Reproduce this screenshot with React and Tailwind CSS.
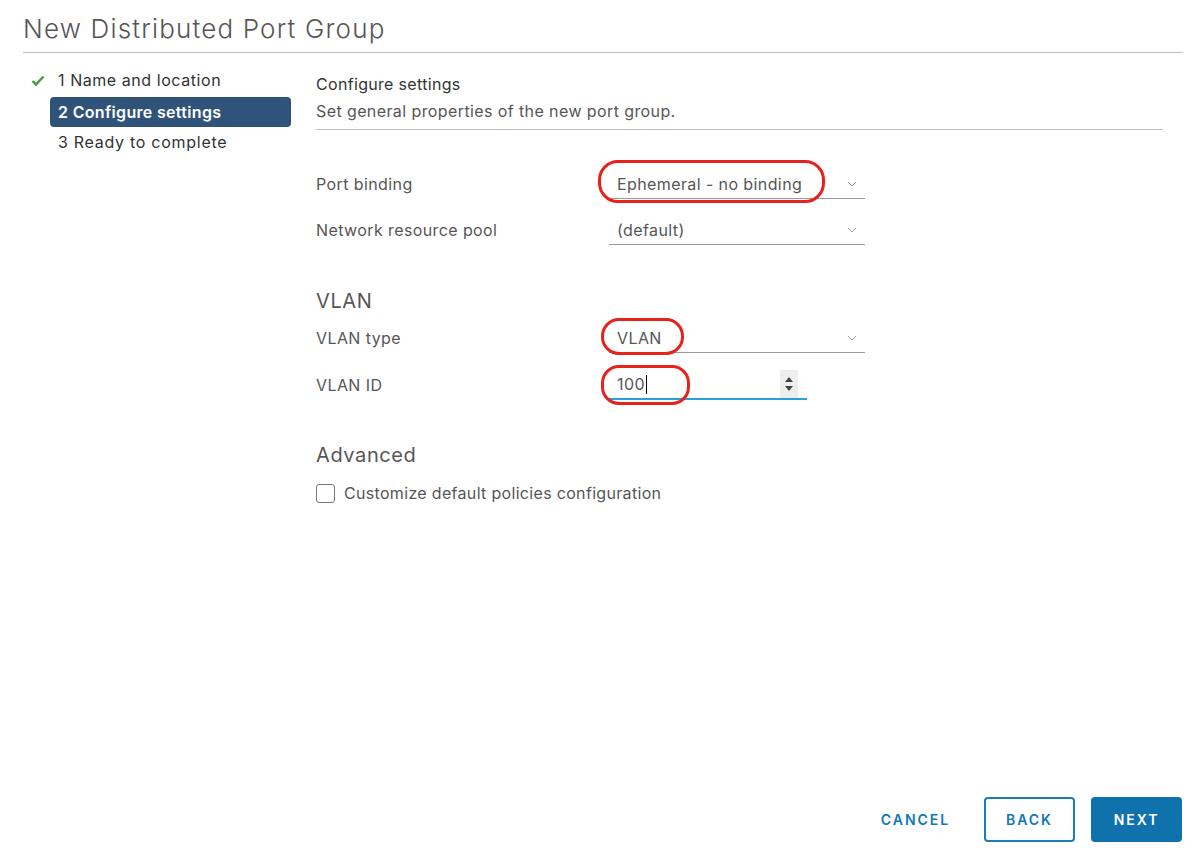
import React from "react";

const font = { fontFamily: "Inter, 'Noto Sans', sans-serif" };

function Chevron() {
  return (
    <svg width="10" height="6" viewBox="0 0 10 6" className="shrink-0">
      <path d="M1 1 L5 5 L9 1" fill="none" stroke="#a0a0a0" strokeWidth="1" />
    </svg>
  );
}

function Select({ value, width }) {
  return (
    <div className={`h-[30px] ${width} border-b border-[#9a9a9a] flex items-center justify-between pl-2 pr-[8px]`}>
      <span className="text-[16px] tracking-[0.025em] text-[#565656]">{value}</span>
      <Chevron />
    </div>
  );
}

function Row({ label, children, className = "" }) {
  return (
    <div className={`flex items-center h-[30px] ${className}`}>
      <div className="w-[293px] text-[16px] tracking-[0.025em] text-[#565656]">{label}</div>
      {children}
    </div>
  );
}

export default function App() {
  return (
    <div className="relative w-[1200px] h-[860px] bg-white flex flex-col" style={font}>
      <div className="mx-[23px] mr-[17px] pt-[13px] pb-[7px] border-b border-[#bdbdbd]">
        <h1 className="text-[26px] leading-[32px] tracking-[0.045em] text-[#565656] font-light">New Distributed Port Group</h1>
      </div>

      <div className="flex flex-1 pl-[23px]">
        {/* Left nav */}
        <div className="w-[293px] pt-[12px] flex flex-col">
          <div className="flex items-center h-[30px]">
            <div className="w-[27px] flex justify-center pl-[2px]">
              <svg width="14" height="11" viewBox="0 0 14 11">
                <path d="M1.5 6 L5 9.5 L12.5 1.5" fill="none" stroke="#3f9e33" strokeWidth="2.4" />
              </svg>
            </div>
            <div className="px-2 text-[16px] tracking-[0.035em] text-[#333]">1 Name and location</div>
          </div>
          <div className="flex items-center h-[30px] mt-[2px]">
            <div className="w-[27px]" />
            <div className="w-[241px] h-[30px] rounded-[4px] bg-[#2f5379] px-2 flex items-center text-[16px] tracking-[0.02em] font-semibold text-white">2 Configure settings</div>
          </div>
          <div className="flex items-center h-[30px]">
            <div className="w-[27px]" />
            <div className="px-2 text-[16px] tracking-[0.045em] text-[#333]">3 Ready to complete</div>
          </div>
        </div>

        {/* Right content */}
        <div className="flex-1 flex flex-col pr-[18px]">
          <div className="w-[847px] pt-[20px] pb-[7px] border-b border-[#bdbdbd]">
            <div className="h-[22px] leading-[22px] text-[16px] tracking-[0.02em] text-[#333]">Configure settings</div>
            <div className="h-[22px] leading-[22px] mt-[5px] text-[16px] tracking-[0.025em] text-[#565656]">Set general properties of the new port group.</div>
          </div>

          <Row label="Port binding" className="mt-[39px]">
            <Select value="Ephemeral - no binding" width="w-[256px]" />
          </Row>
          <Row label="Network resource pool" className="mt-[16px]">
            <Select value="(default)" width="w-[256px]" />
          </Row>

          <div className="mt-[43px] h-[26px] leading-[26px] text-[20px] tracking-[0.03em] text-[#565656]">VLAN</div>
          <Row label="VLAN type" className="mt-[9px]">
            <Select value="VLAN" width="w-[256px]" />
          </Row>
          <Row label="VLAN ID" className="mt-[17px]">
            <div className="w-[198px] h-[30px] border-b-2 border-[#2a9fd8] flex items-center justify-between pl-2">
              <span className="text-[16px] tracking-[0.025em] text-[#565656] flex items-center">
                100<span className="inline-block w-[1.5px] h-[19px] bg-black ml-[1px]" />
              </span>
              <div className="w-[18px] h-[28px] bg-[#eeeeee] mr-[9px] flex flex-col items-center justify-center gap-[4px]">
                <svg width="8" height="5" viewBox="0 0 8 5"><path d="M4 0 L8 5 L0 5 Z" fill="#444" /></svg>
                <svg width="8" height="5" viewBox="0 0 8 5"><path d="M0 0 L8 0 L4 5 Z" fill="#444" /></svg>
              </div>
            </div>
          </Row>

          <div className="mt-[42px] h-[26px] leading-[26px] text-[20px] tracking-[0.03em] text-[#565656]">Advanced</div>
          <label className="mt-[13px] h-[24px] flex items-center gap-[9px]">
            <span className="w-[19px] h-[19px] rounded-[3px] border border-[#777] bg-white" />
            <span className="text-[16px] tracking-[0.02em] text-[#565656]">Customize default policies configuration</span>
          </label>

          <div className="mt-auto mb-[18px] flex justify-end items-center gap-[16px]">
            <button className="w-[91px] h-[45px] mr-[7px] text-[14px] font-semibold tracking-[0.14em] text-[#0f79b5]">CANCEL</button>
            <button className="w-[91px] h-[45px] rounded-[4px] border-2 border-[#1a7dbb] bg-white text-[14px] font-semibold tracking-[0.14em] text-[#0f79b5]">BACK</button>
            <button className="w-[91px] h-[45px] rounded-[4px] bg-[#0f72ad] text-[14px] font-semibold tracking-[0.14em] text-white">NEXT</button>
          </div>
        </div>
      </div>

      {/* Red annotation ovals */}
      <div className="absolute left-[598px] top-[160px] w-[227px] h-[43px] rounded-[20px] border-[3px] border-[#e5231b]" />
      <div className="absolute left-[601px] top-[318px] w-[83px] h-[37px] rounded-[18px] border-[3px] border-[#e5231b]" />
      <div className="absolute left-[601px] top-[365px] w-[89px] h-[40px] rounded-[18px] border-[3px] border-[#e5231b]" />
    </div>
  );
}
